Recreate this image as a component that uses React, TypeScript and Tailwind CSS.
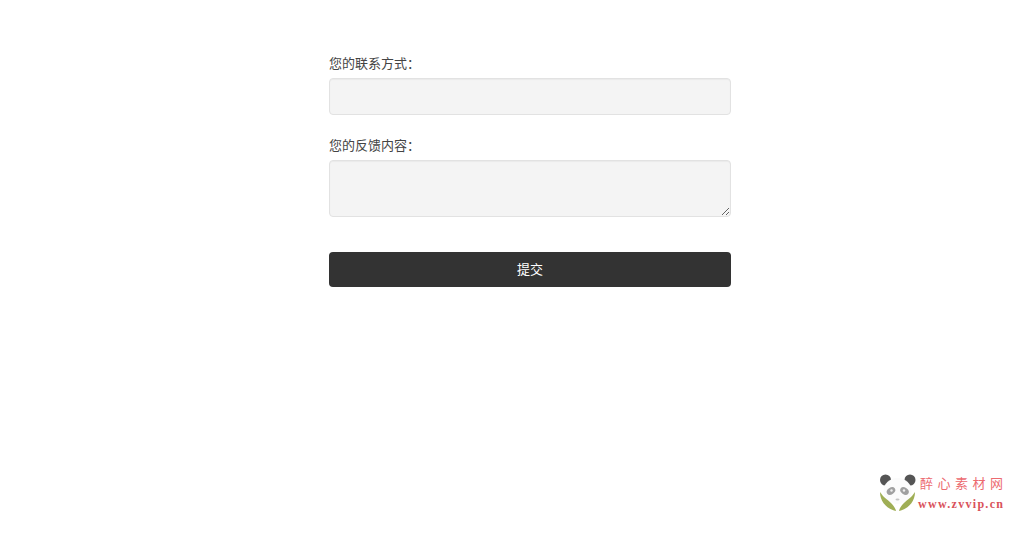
const cjk = "font-['Liberation_Sans','Noto_Sans_CJK_SC',sans-serif]";

function PandaLogo() {
  return (
    <svg width="38" height="38" viewBox="0 0 38 38" className="shrink-0">
      <circle cx="6.5" cy="7" r="5.5" fill="#555" />
      <circle cx="31" cy="7" r="5.5" fill="#555" />
      <ellipse cx="18.5" cy="18" rx="14" ry="13" fill="#fbfbfb" />
      <ellipse cx="12" cy="18" rx="4.6" ry="3.4" transform="rotate(-35 12 18)" fill="#a0a0a0" />
      <ellipse cx="25.5" cy="18" rx="4.6" ry="3.4" transform="rotate(35 25.5 18)" fill="#a0a0a0" />
      <circle cx="12.5" cy="17.5" r="1.2" fill="#eee" />
      <circle cx="25" cy="17.5" r="1.2" fill="#eee" />
      <ellipse cx="18.5" cy="26.5" rx="2" ry="1" fill="#c4c4c4" />
      <path d="M1 19 C1 29 8 36 17 38 C16 32 8 27 4 23 C3 22 2 20 1 19 Z" fill="#9fae55" />
      <path d="M36 19 C36 29 29 36 20 38 C21 32 29 27 33 23 C34 22 35 20 36 19 Z" fill="#9fae55" />
    </svg>
  );
}

export default function App() {
  return (
    <div className={`relative h-[536px] w-[1024px] overflow-hidden bg-white ${cjk}`}>
      <form className="ml-[329px] flex w-[402px] flex-col pt-[55px]">
        <label className="text-[13px] leading-[18px] text-[#444]">您的联系方式：</label>
        <input
          type="text"
          className="mt-[5px] h-[37px] rounded-[4px] border border-[#e2e2e2] bg-[#f4f4f4] shadow-[inset_0_1px_1px_rgba(0,0,0,0.04)]"
        />
        <label className="mt-[22px] text-[13px] leading-[18px] text-[#444]">您的反馈内容：</label>
        <textarea className="mt-[5px] block h-[57px] rounded-[4px] border border-[#e2e2e2] bg-[#f4f4f4] shadow-[inset_0_1px_1px_rgba(0,0,0,0.04)]" />
        <button
          type="button"
          className="mt-[35px] h-[35px] rounded-[4px] bg-[#333333] text-[13px] text-white"
        >
          提交
        </button>
      </form>

      {/* watermark in the corner */}
      <div className="absolute top-[473px] left-[879px] flex items-center gap-[1px]">
        <PandaLogo />
        <div className="flex w-[90px] flex-col items-start">
          <span className="pl-[2px] text-[13px] leading-[20px] tracking-[4.5px] whitespace-nowrap text-[#ec6a70]">
            醉心素材网
          </span>
          <span className="mt-[3px] font-['Liberation_Serif',serif] text-[12px] leading-[14px] font-bold tracking-[1.3px] whitespace-nowrap text-[#d9525a]">
            www.zvvip.cn
          </span>
        </div>
      </div>
    </div>
  );
}
